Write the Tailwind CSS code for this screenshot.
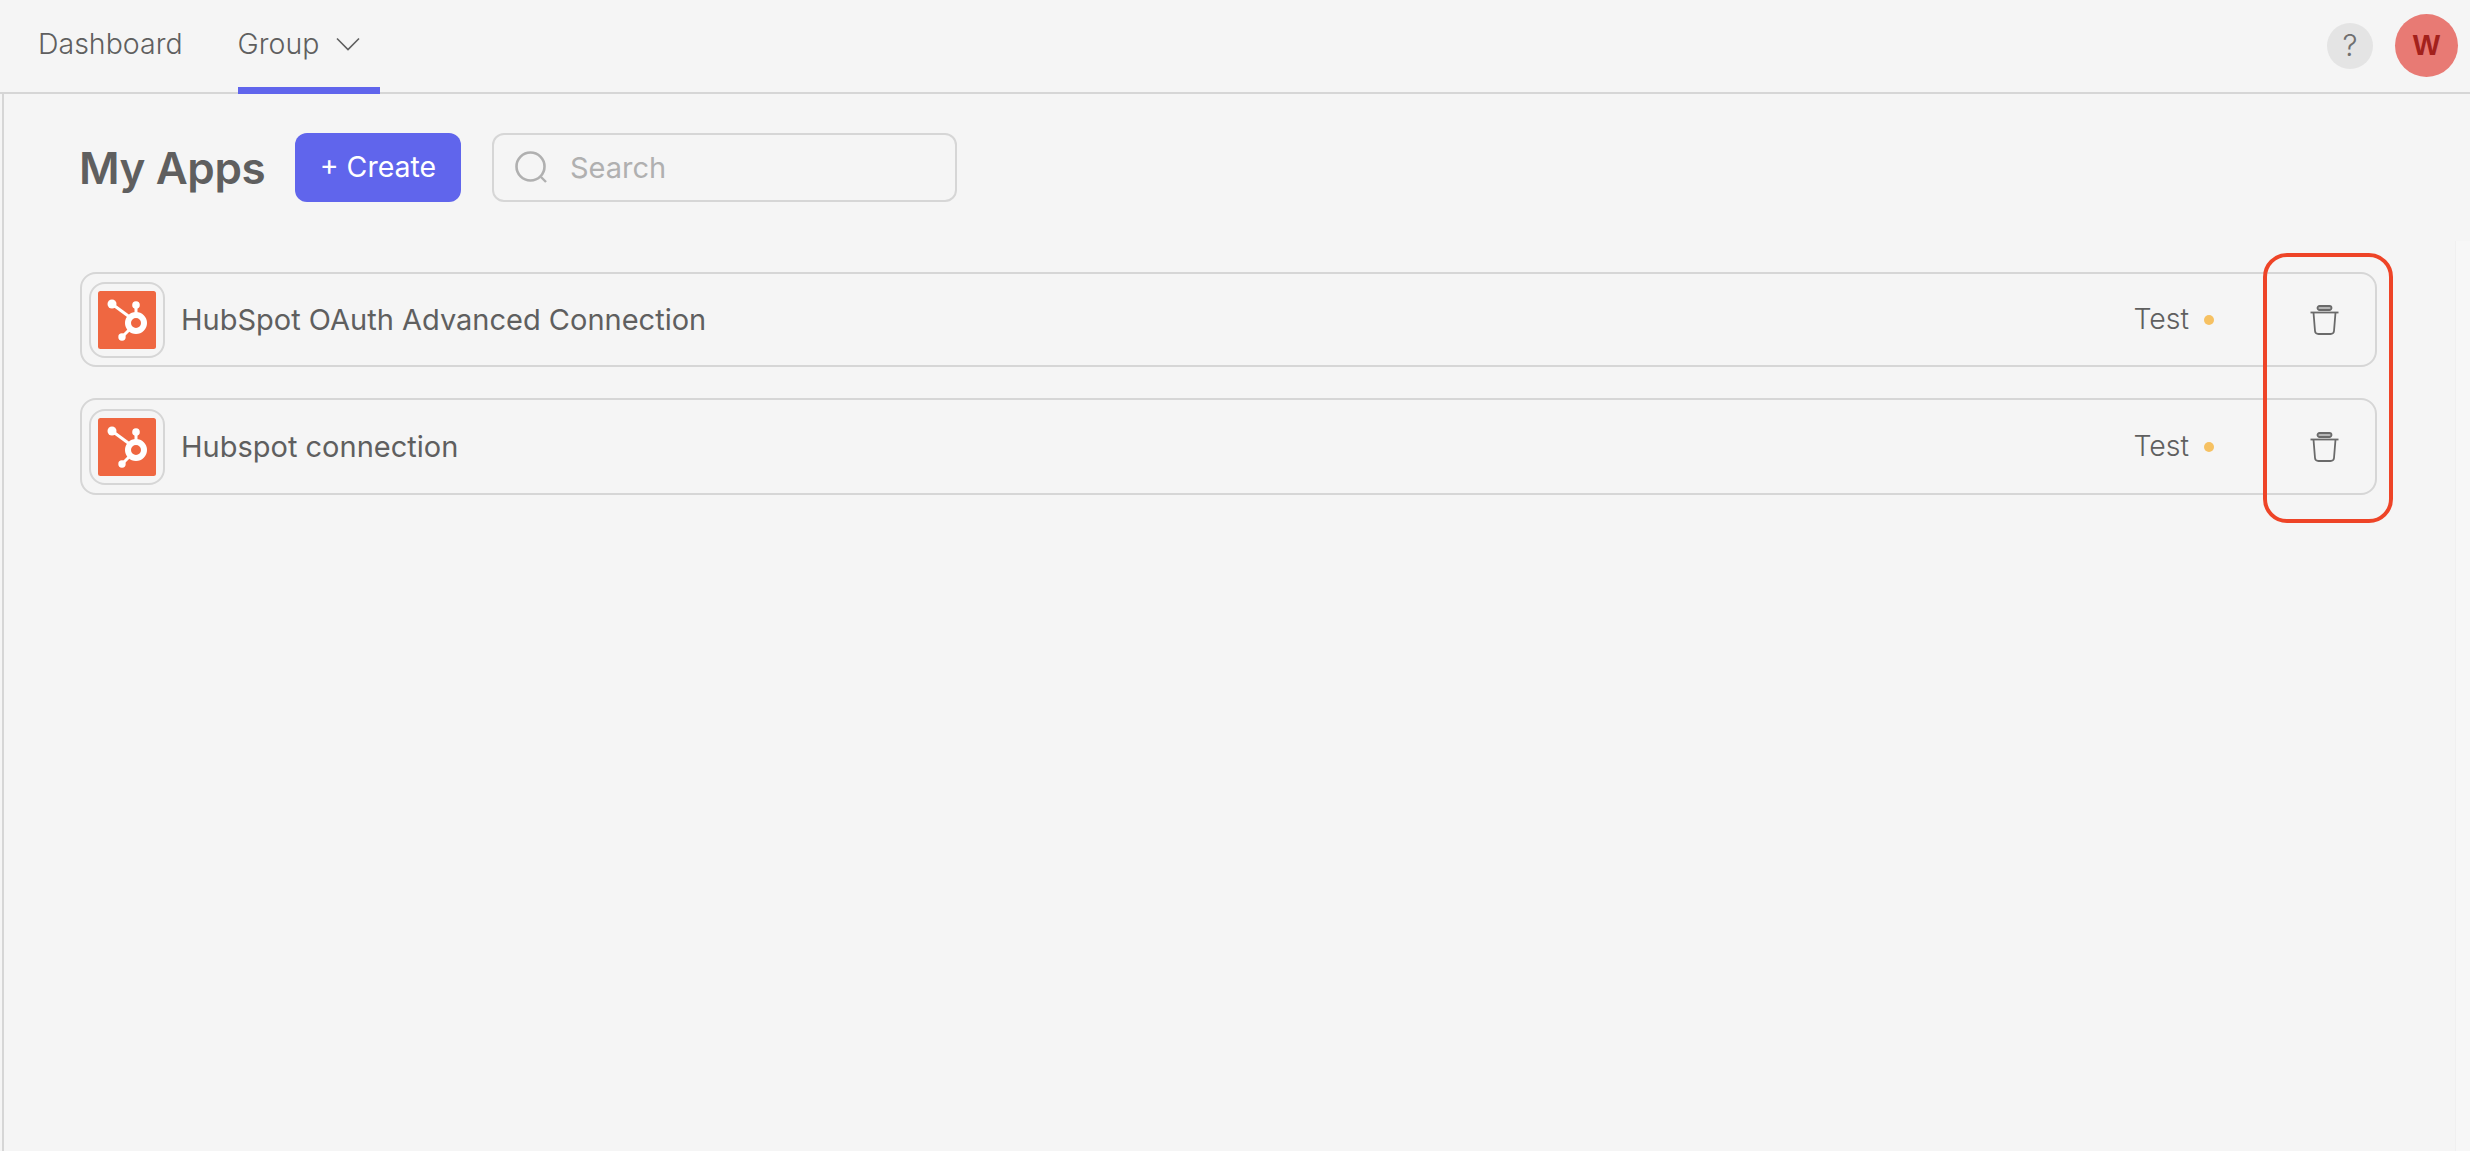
<!DOCTYPE html>
<html lang="en">
<head>
  <meta charset="UTF-8" />
  <title>My Apps</title>
  <script src="https://cdn.jsdelivr.net/npm/@tailwindcss/browser@4"></script>
</head>
<body class="bg-[#f5f5f5] text-[#5f5f5f] font-['Inter',sans-serif] h-[1151px] overflow-hidden relative">

  <!-- Header -->
  <header class="h-[94px] border-b-2 border-[#d6d6d6] flex items-center justify-between pl-[38px] pr-[12px]">
    <nav class="flex h-[94px] self-start gap-[55px] text-[28.5px] font-light">
      <a class="flex items-center pt-[2px] border-b-[7px] border-transparent">Dashboard</a>
      <a class="flex items-center gap-[17px] w-[142px] pt-[2px] border-b-[7px] border-[#6065ec]">
        Group
        <svg class="w-[24px] h-[14px] mt-[-2px]" viewBox="0 0 24 14" fill="none" stroke="#5f5f5f" stroke-width="1.6"><path d="M1 1.5 L12 12.5 L23 1.5" /></svg>
      </a>
    </nav>
    <div class="flex items-center gap-[22px] pb-[1px]">
      <div class="w-[46px] h-[46px] rounded-full bg-[#e4e4e4] flex items-center justify-center text-[30px] font-light text-[#6f6f6f]">?</div>
      <div class="w-[63px] h-[63px] rounded-full bg-[#e87a74] flex items-center justify-center text-[29px] font-bold text-[#a3211c] font-['Liberation_Sans',sans-serif]">W</div>
    </div>
  </header>

  <!-- Main -->
  <main class="border-l-2 border-[#d6d6d6] ml-[2px] h-[1057px] pl-[76px] pr-[93px]">
    <div class="flex items-center pt-[39px]">
      <h1 class="text-[44px] font-semibold leading-[68px] w-[215px] ml-[-1px] mr-[1px] tracking-[-0.4px]">My Apps</h1>
      <button class="w-[166px] h-[69px] rounded-[12px] bg-[#6065ec] text-white text-[28.5px] font-normal">+ Create</button>
      <div class="ml-[31px] w-[465px] h-[69px] rounded-[12px] border-2 border-[#d6d6d6] flex items-center pl-[21px] text-[29px] text-[#b0b0b0]">
        <svg class="w-[34px] h-[34px] mr-[21px]" viewBox="0 0 34 34" fill="none" stroke="#b0b0b0"><circle cx="15.5" cy="15.5" r="14" stroke-width="2.6" /><path d="M26 26 L31 31" stroke-width="2.4" /></svg>
        Search
      </div>
    </div>

    <div class="mt-[70px] flex flex-col gap-[31px]" id="app-list">
      <div class="h-[95px] rounded-[16px] border-2 border-[#d6d6d6] flex items-center pl-[7px]">
        <div class="w-[76px] h-[76px] rounded-[16px] border-2 border-[#d6d6d6] flex items-center justify-center">
          <svg class="w-[58px] h-[58px]" viewBox="0 0 58 58"><rect width="58" height="58" rx="2.5" fill="#ef6741" /><g fill="none" stroke="#fff"><circle cx="38" cy="32" r="8" stroke-width="6" /><path d="M14 13 L33 27" stroke-width="3" /><path d="M38 14 V23" stroke-width="3" /><path d="M24 46 L32 38" stroke-width="3" /></g><circle cx="14" cy="13" r="4.5" fill="#fff" /><circle cx="38" cy="14" r="3.8" fill="#fff" /><circle cx="24" cy="46" r="3.7" fill="#fff" /></svg>
        </div>
        <span class="ml-[16px] text-[29px] flex-1">HubSpot OAuth Advanced Connection</span>
        <span class="text-[28.5px] font-light">Test</span>
        <span class="ml-[15px] w-[10px] h-[10px] rounded-full bg-[#f6c162]"></span>
        <svg class="ml-[96px] mr-[36px] w-[29px] h-[30px]" viewBox="0 0 29 30" fill="none" stroke="#6a6a6a" stroke-width="1.8"><path d="M0.5 7.5 H28.5" /><path d="M3.5 7.5 L5 26 Q5.3 29 8.5 29 H20.5 Q23.7 29 24 26 L25.5 7.5" /><rect x="7.5" y="1" width="14" height="4" rx="2" fill="#b5b5b5" /></svg>
      </div>
      <div class="h-[97px] rounded-[16px] border-2 border-[#d6d6d6] flex items-center pl-[7px]">
        <div class="w-[76px] h-[76px] rounded-[16px] border-2 border-[#d6d6d6] flex items-center justify-center">
          <svg class="w-[58px] h-[58px]" viewBox="0 0 58 58"><rect width="58" height="58" rx="2.5" fill="#ef6741" /><g fill="none" stroke="#fff"><circle cx="38" cy="32" r="8" stroke-width="6" /><path d="M14 13 L33 27" stroke-width="3" /><path d="M38 14 V23" stroke-width="3" /><path d="M24 46 L32 38" stroke-width="3" /></g><circle cx="14" cy="13" r="4.5" fill="#fff" /><circle cx="38" cy="14" r="3.8" fill="#fff" /><circle cx="24" cy="46" r="3.7" fill="#fff" /></svg>
        </div>
        <span class="ml-[16px] text-[29px] flex-1">Hubspot connection</span>
        <span class="text-[28.5px] font-light">Test</span>
        <span class="ml-[15px] w-[10px] h-[10px] rounded-full bg-[#f6c162]"></span>
        <svg class="ml-[96px] mr-[36px] w-[29px] h-[30px]" viewBox="0 0 29 30" fill="none" stroke="#6a6a6a" stroke-width="1.8"><path d="M0.5 7.5 H28.5" /><path d="M3.5 7.5 L5 26 Q5.3 29 8.5 29 H20.5 Q23.7 29 24 26 L25.5 7.5" /><rect x="7.5" y="1" width="14" height="4" rx="2" fill="#b5b5b5" /></svg>
      </div>
    </div>
  </main>

  <!-- Scroll strip -->
  <div class="absolute left-[2455px] top-[241px] bottom-0 right-0 bg-[#f7f7f7] border-l border-[#f0f0f0]"></div>

  <!-- Annotation over the delete buttons -->
  <div class="absolute left-[2263px] top-[253px] w-[130px] h-[270px] border-[4px] border-[#ee4427] rounded-[24px]"></div>

</body>
</html>
